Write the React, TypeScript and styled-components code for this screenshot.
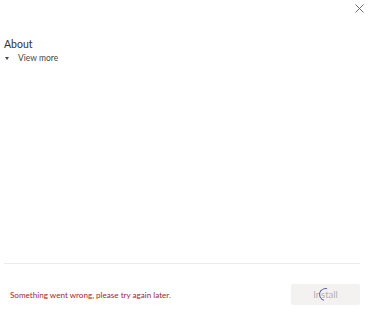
import styled, { createGlobalStyle } from "styled-components";

const Global = createGlobalStyle`
  html, body { margin: 0; padding: 0; background: #fff; }
  body { font-family: Lato, "Open Sans", sans-serif; color: #252423; }
`;

const Page = styled.div`
  width: 369px;
  height: 315px;
  display: flex;
  flex-direction: column;
  box-sizing: border-box;
`;

const TopBar = styled.div`
  display: flex;
  justify-content: flex-end;
  padding: 2px 4px 0 0;
  height: 14px;
`;

const CloseButton = styled.button`
  border: 0;
  background: none;
  padding: 0;
  width: 12px;
  height: 12px;
  display: flex;
  align-items: center;
  justify-content: center;
`;

const Body = styled.div`
  flex: 1;
  padding: 22px 4px 0 4px;
`;

const Heading = styled.h2`
  margin: 0;
  font-size: 10.5px;
  font-weight: 400;
  line-height: 13px;
  color: #323130;
`;

const Toggle = styled.div`
  display: flex;
  align-items: center;
  gap: 9px;
  margin-top: 1px;
  font-size: 8.5px;
  line-height: 12px;
  color: #484644;
  padding-left: 1px;
`;

const Caret = styled.span`
  width: 0;
  height: 0;
  border-left: 2.5px solid transparent;
  border-right: 2.5px solid transparent;
  border-top: 3px solid #484644;
`;

const Divider = styled.hr`
  margin: 0 9px 0 4px;
  border: 0;
  border-top: 1px solid #edebe9;
`;

const Footer = styled.div`
  display: flex;
  align-items: center;
  justify-content: space-between;
  padding: 20px 9px 10px 10px;
`;

const ErrorText = styled.span`
  font-size: 8.1px;
  color: #a4262c;
`;

const InstallButton = styled.button`
  position: relative;
  width: 69px;
  height: 21px;
  border: 0;
  border-radius: 2px;
  background: #f3f2f1;
  color: #b3b0ad;
  font-family: Lato, "Open Sans", sans-serif;
  font-size: 9.5px;
  padding: 0;
`;

const Spinner = styled.span`
  position: absolute;
  left: 28px;
  top: 4px;
  width: 11px;
  height: 11px;
  border-radius: 50%;
  border: 1.5px solid transparent;
  border-left-color: #6264a7;
  border-top-color: #6264a7;
  transform: rotate(-30deg);
`;

export default function App() {
  return (
    <Page>
      <Global />
      <TopBar>
        <CloseButton aria-label="Close">
          <svg width="9" height="9" viewBox="0 0 9 9">
            <path d="M0.5 0.5 L8.5 8.5 M8.5 0.5 L0.5 8.5" stroke="#605e5c" strokeWidth="0.9" />
          </svg>
        </CloseButton>
      </TopBar>
      <Body>
        <Heading>About</Heading>
        <Toggle>
          <Caret />
          View more
        </Toggle>
      </Body>
      <Divider />
      <Footer>
        <ErrorText>Something went wrong, please try again later.</ErrorText>
        <InstallButton disabled>
          Install
          <Spinner />
        </InstallButton>
      </Footer>
    </Page>
  );
}
